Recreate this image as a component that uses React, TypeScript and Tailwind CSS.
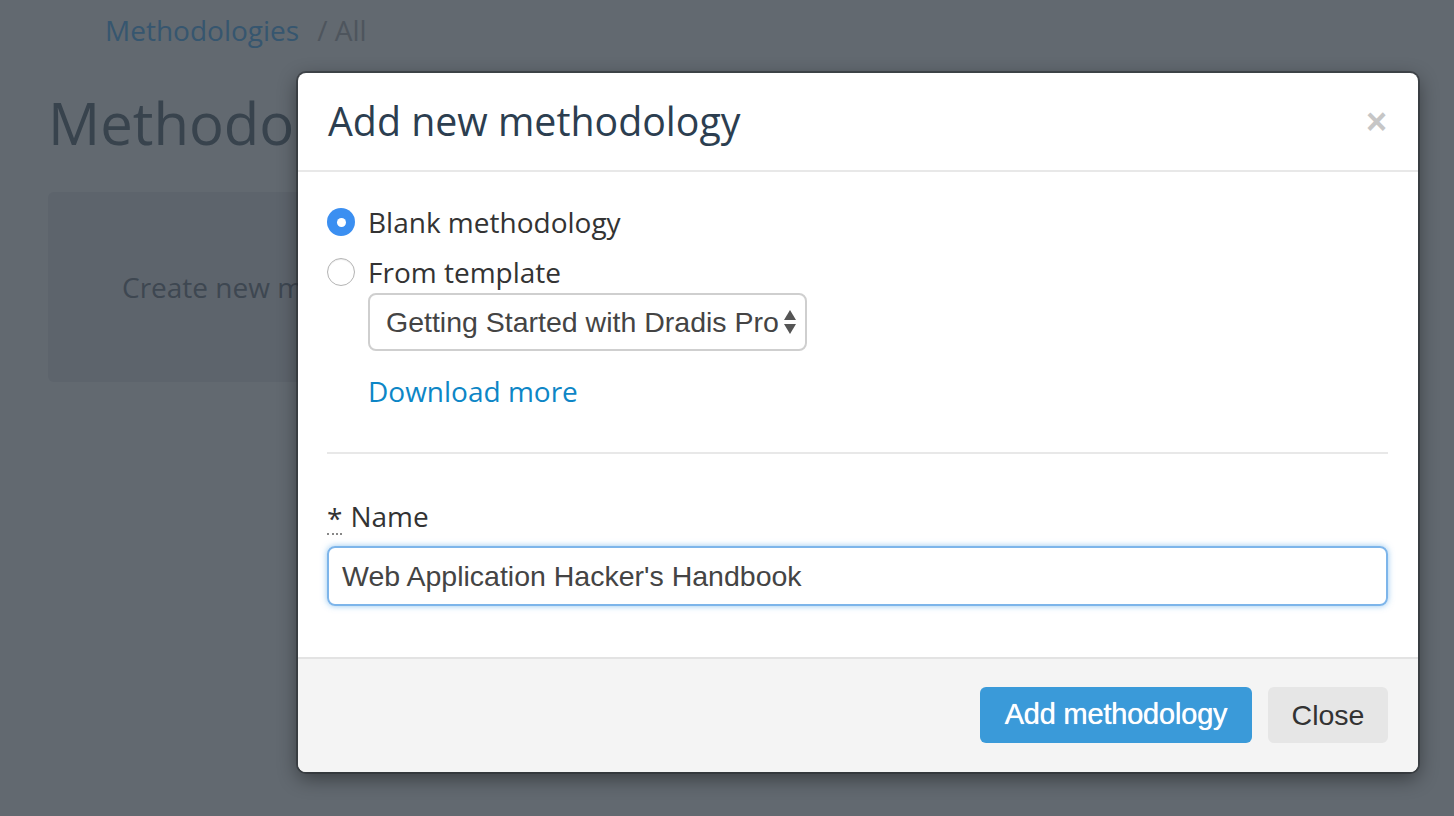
export default function App() {
  return (
    <div className="relative w-[1454px] h-[816px] overflow-hidden bg-[#626970] font-['Open_Sans',sans-serif]">
      {/* page behind the overlay */}
      <div className="px-[48px]">
        <div className="flex items-center h-[60px] pl-[57px] text-[28px]">
          <span className="text-[#36566f]">Methodologies</span>
          <span className="ml-[18px] text-[#4e555d]">/ All</span>
        </div>
        <h1 className="mt-[25px] text-[58px] leading-[76px] text-[#38434d]">Methodologies</h1>
        <div className="mt-[31px] h-[190px] rounded-md bg-[#5d646c] flex items-center pl-[74px] text-[28px] text-[#3e4751]">
          Create new methodology
        </div>
      </div>

      {/* modal */}
      <div className="absolute left-[298px] top-[73px] w-[1120px] rounded-[8px] bg-white shadow-[0_0_0_2px_rgba(40,44,48,0.55),0_6px_20px_rgba(0,0,0,0.45)] overflow-hidden">
        <div className="flex items-center justify-between h-[99px] px-[30px] border-b-2 border-[#e8e8e8]">
          <h2 className="text-[39.3px] text-[#2c3e50] leading-none">Add new methodology</h2>
          <span className="text-[#c6c6c6] text-[36px] font-bold leading-none mr-[1px] font-['Liberation_Sans',sans-serif]">×</span>
        </div>

        <div className="pl-[29px] pr-[30px] pt-[30px] pb-[51px]">
          <label className="flex items-center h-[40px] text-[28px] text-[#333]">
            <span className="w-[28px] h-[28px] rounded-full bg-[#3b8ff1] flex items-center justify-center">
              <span className="w-[9px] h-[9px] rounded-full bg-white" />
            </span>
            <span className="ml-[13px]">Blank methodology</span>
          </label>
          <label className="flex items-center h-[40px] mt-[10px] text-[28px] text-[#333]">
            <span className="w-[28px] h-[28px] rounded-full bg-white border border-[#b4b4b4] shadow-[inset_0_1px_1px_rgba(0,0,0,0.08)]" />
            <span className="ml-[13px]">From template</span>
          </label>
          <div className="ml-[41px]">
            <div className="mt-[1px] flex items-center justify-between w-[439px] h-[58px] rounded-[8px] border-2 border-[#cfcfcf] pl-[16px] pr-[8px] text-[28.5px] text-[#444] font-['Liberation_Sans',sans-serif]">
              <span className="whitespace-nowrap">Getting Started with Dradis Pro</span>
              <svg width="14" height="26" viewBox="0 0 14 26" className="shrink-0">
                <path d="M7 1 L13 11 L1 11 Z" fill="#555" />
                <path d="M7 25 L13 15 L1 15 Z" fill="#555" />
              </svg>
            </div>
            <div className="mt-[20px] h-[40px] flex items-center text-[28px] text-[#0d86c6]">Download more</div>
          </div>

          <div className="mt-[41px] border-t-2 border-[#e8e8e8]" />

          <div className="mt-[42px] h-[40px] flex items-center text-[28px] text-[#333]">
            <span className="border-b-2 border-dotted border-[#888] leading-[30px] mt-[6px]">*</span>
            <span className="ml-[8px]">Name</span>
          </div>
          <div className="mt-[10px] h-[60px] rounded-[8px] border-2 border-[#7db5ea] shadow-[0_0_6px_rgba(102,175,233,0.7)] flex items-center px-[13px] text-[28.5px] text-[#444] font-['Liberation_Sans',sans-serif]">
            Web Application Hacker's Handbook
          </div>
        </div>

        <div className="border-t-2 border-[#e3e3e3] bg-[#f4f4f4] h-[115px] flex items-start justify-end gap-[16px] pt-[28px] pr-[30px]">
          <button className="h-[56px] w-[272px] rounded-[6px] bg-[#3a9ad9] text-white text-[29px] font-['Liberation_Sans',sans-serif] tracking-[-0.2px] [text-shadow:0_0_0.7px_#fff]">
            Add methodology
          </button>
          <button className="h-[56px] w-[120px] rounded-[6px] bg-[#e6e6e6] text-[#333] text-[28.5px] font-['Liberation_Sans',sans-serif]">
            Close
          </button>
        </div>
      </div>
    </div>
  );
}
